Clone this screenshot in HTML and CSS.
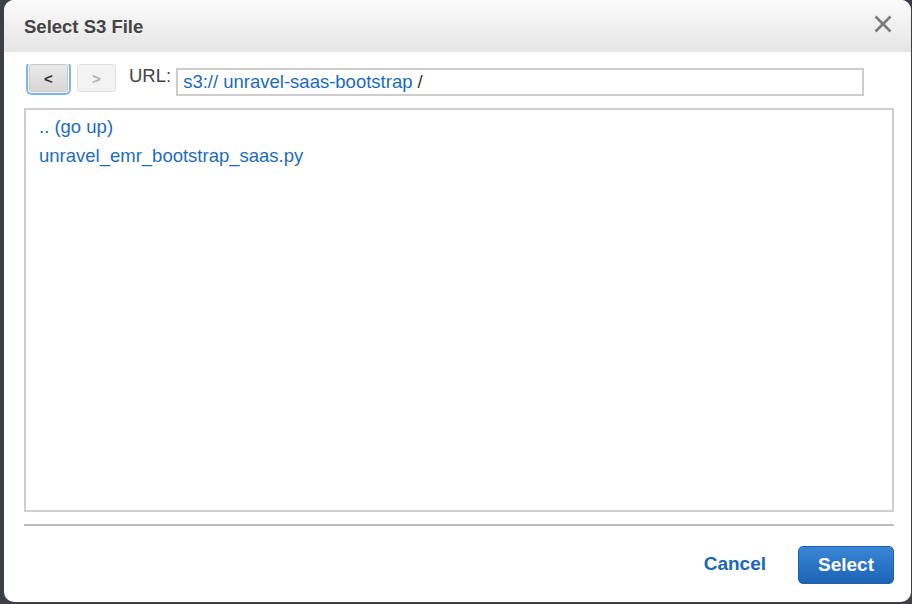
FILE: index.html
```html
<!DOCTYPE html>
<html>
<head>
<meta charset="utf-8">
<link rel="stylesheet" href="styles.css">
</head>
<body>
<div class="backdrop">
  <div class="modal">
    <div class="modal-header">
      <span class="title">Select S3 File</span>
      <span class="close" aria-label="close">
        <svg width="18" height="18" viewBox="0 0 18 18"><path d="M1.5 1.5 L16.5 16.5 M16.5 1.5 L1.5 16.5" stroke="#7a7a7a" stroke-width="2.6" stroke-linecap="butt" fill="none"/></svg>
      </span>
    </div>
    <div class="modal-body">
      <div class="toolbar">
        <div class="nav">
          <button class="navbtn focused">&lt;</button>
          <button class="navbtn disabled">&gt;</button>
        </div>
        <span class="url-label">URL:</span>
        <div class="url-box"><span class="link">s3:// unravel-saas-bootstrap</span> /</div>
      </div>
      <div class="file-list">
        <div class="item">.. (go up)</div>
        <div class="item">unravel_emr_bootstrap_saas.py</div>
      </div>
      <div class="sep"></div>
      <div class="footer">
        <span class="cancel">Cancel</span>
        <button class="select">Select</button>
      </div>
    </div>
  </div>
</div>
</body>
</html>
```
FILE: styles.css
```css
html, body {
  margin: 0;
  padding: 0;
  background: #3c4045;
  font-family: "Liberation Sans", Arial, sans-serif;
}
.backdrop {
  width: 912px;
  height: 604px;
  overflow: hidden;
}
.modal {
  margin-left: 4px;
  width: 907px;
  height: 602px;
  background: #fff;
  border-radius: 10px;
  overflow: hidden;
  display: flex;
  flex-direction: column;
}
.modal-header {
  height: 52px;
  flex: none;
  box-sizing: border-box;
  padding: 0 18px 0 20px;
  display: flex;
  align-items: center;
  justify-content: space-between;
  background: linear-gradient(#fbfbfb, #e5e5e5);
}
.title {
  font-weight: bold;
  font-size: 18.5px;
  color: #444;
  position: relative;
  top: 1px;
}
.close {
  display: flex;
  width: 18px;
  height: 18px;
  margin-top: -4px;
  margin-right: 1px;
}
.modal-body {
  padding: 0 17px 0 20px;
  display: flex;
  flex-direction: column;
  flex: 1;
  overflow: hidden;
}
.toolbar {
  display: flex;
  align-items: center;
  margin-top: 12px;
  height: 33px;
  overflow: hidden;
  padding-bottom: 0;
}
.nav {
  display: flex;
  gap: 9px;
  align-self: flex-start;
}
.navbtn {
  width: 39px;
  height: 28px;
  padding: 0;
  border: 1px solid #c9c9c9;
  border-radius: 3px;
  font-family: "Liberation Sans", Arial, sans-serif;
  font-weight: bold;
  font-size: 15px;
  color: #333;
  background: linear-gradient(#ebebeb, #d6d6d6);
}
.navbtn.focused {
  margin-left: 5px;
  box-shadow: 0 0 0 1px #fff, 0 0 0 3px #7fb2f0;
}
.navbtn.disabled {
  background: #f3f3f3;
  border-color: #e0e0e0;
  color: #b0b0b0;
  width: 39px;
}
.url-label {
  margin-left: 13px;
  font-size: 18.5px;
  color: #444;
  align-self: flex-start;
  margin-top: 1px;
}
.url-box {
  margin-left: 5px;
  width: 688px;
  height: 28px;
  box-sizing: border-box;
  border: 2px solid #cdcdcd;
  font-size: 18.5px;
  line-height: 22px;
  color: #333;
  padding: 1px 0 0 5px;
  align-self: flex-start;
  margin-top: 4px;
}
.link { color: #1a6bc0; }
.file-list {
  margin-top: 11px;
  height: 404px;
  box-sizing: border-box;
  border: 2px solid #cfcfcf;
  padding: 2px 13px;
}
.item {
  font-size: 18.5px;
  color: #1d6cbf;
  line-height: 29px;
}
.sep {
  margin-top: 12px;
  height: 2px;
  background: #bdbdbd;
}
.footer {
  display: flex;
  justify-content: flex-end;
  align-items: center;
  margin-top: 20px;
}
.cancel {
  font-weight: bold;
  font-size: 19px;
  color: #1a66b8;
  margin-right: 32px;
  position: relative;
  top: -1px;
}
.select {
  width: 96px;
  height: 38px;
  border: 1px solid #1b5fae;
  border-radius: 5px;
  background: linear-gradient(#3a86d6, #1c63b6);
  color: #fff;
  font-family: "Liberation Sans", Arial, sans-serif;
  font-weight: bold;
  font-size: 19px;
  padding: 0;
}
```
